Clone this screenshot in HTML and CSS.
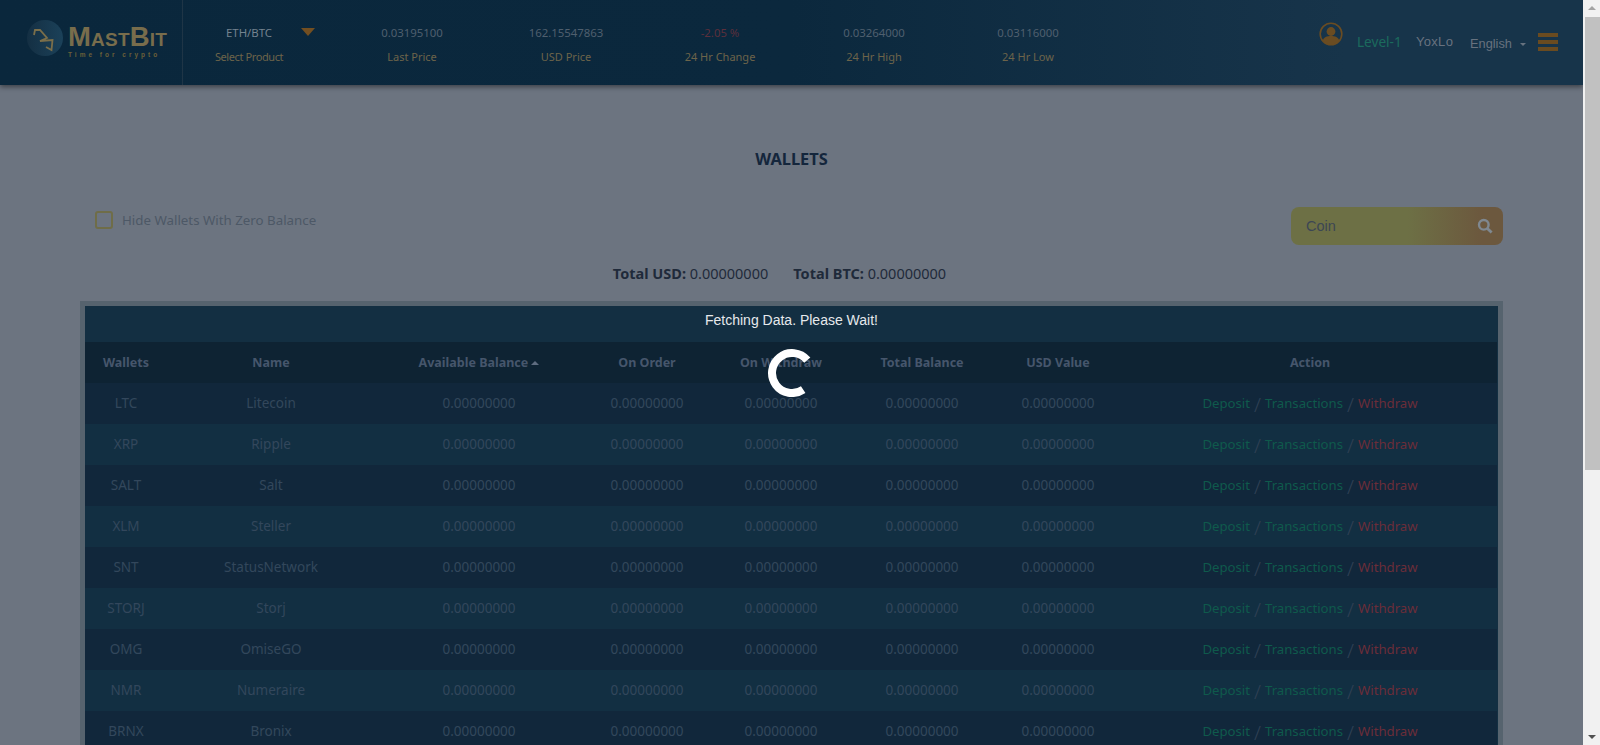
FILE: index.html
```html
<!DOCTYPE html>
<html lang="en">
<head>
    <meta charset="UTF-8">
    <meta name="viewport" content="width=device-width, initial-scale=1.0">
    <title>MastBit - Wallets</title>
    <link rel="stylesheet" href="styles.css">
</head>
<body>
    <div class="page">
        <header class="topbar">
            <div class="logo">
                <svg class="logo-mark" width="36" height="36" viewBox="0 0 36 36">
                    <defs>
                        <linearGradient id="logoBg" x1="0" y1="0" x2="1" y2="0">
                            <stop offset="0" stop-color="#142f43"/>
                            <stop offset="1" stop-color="#1b4159"/>
                        </linearGradient>
                    </defs>
                    <circle cx="18" cy="18" r="18" fill="url(#logoBg)"/>
                    <path d="M7 15 L8 10 L13 10 L20 18 L13 21 L25.5 20 L24.5 30 L19 27" fill="none" stroke="#7a6e4a" stroke-width="1.8"/>
                </svg>
                <div class="logo-text">
                    <div class="logo-name"><span class="cap">M</span>AST<span class="cap">B</span>IT</div>
                    <div class="logo-tag">Time for crypto</div>
                </div>
            </div>
            <div class="product">
                <div class="stat-value product-name">ETH/BTC</div>
                <div class="stat-label">Select Product</div>
                <span class="product-arrow"></span>
            </div>
            <div class="stats">
                <div class="stat">
                    <div class="stat-value">0.03195100</div>
                    <div class="stat-label">Last Price</div>
                </div>
                <div class="stat">
                    <div class="stat-value">162.15547863</div>
                    <div class="stat-label">USD Price</div>
                </div>
                <div class="stat">
                    <div class="stat-value negative">-2.05 %</div>
                    <div class="stat-label">24 Hr Change</div>
                </div>
                <div class="stat">
                    <div class="stat-value">0.03264000</div>
                    <div class="stat-label">24 Hr High</div>
                </div>
                <div class="stat">
                    <div class="stat-value">0.03116000</div>
                    <div class="stat-label">24 Hr Low</div>
                </div>
            </div>
            <div class="user-menu">
                <svg class="user-icon" width="24" height="24" viewBox="0 0 24 24">
                    <circle cx="12" cy="12" r="10.8" fill="none" stroke="#6a4c22" stroke-width="1.6"/>
                    <circle cx="12" cy="9.5" r="4.4" fill="#6a4c22"/>
                    <path d="M3.6 19 C4.5 15 8 14 12 14 C16 14 19.5 15 20.4 19 C18 21.6 15 22.4 12 22.4 C9 22.4 6 21.6 3.6 19 Z" fill="#6a4c22"/>
                </svg>
                <span class="level">Level-1</span>
                <span class="username">YoxLo</span>
                <span class="language">English<span class="caret"></span></span>
                <div class="hamburger"><span></span><span></span><span></span></div>
            </div>
        </header>

        <main class="content">
            <h1 class="title">WALLETS</h1>
            <div class="filters">
                <label class="hide-zero"><span class="checkbox"></span>Hide Wallets With Zero Balance</label>
                <div class="search">
                    <span>Coin</span>
                    <svg width="16" height="16" viewBox="0 0 16 16">
                        <circle cx="6.8" cy="6.8" r="4.8" fill="none" stroke="#7f8890" stroke-width="2.4"/>
                        <path d="M10.4 10.4 L14.6 14.6" stroke="#7f8890" stroke-width="2.8"/>
                    </svg>
                </div>
            </div>
            <div class="totals">
                <span><b>Total USD:</b> 0.00000000</span>
                <span><b>Total BTC:</b> 0.00000000</span>
            </div>

            <div class="table-wrap">
                <div class="fetching">Fetching Data. Please Wait!</div>
                <table class="wallets">
                    <colgroup>
                        <col class="c-coin"><col class="c-name"><col class="c-avail"><col class="c-order">
                        <col class="c-withdraw"><col class="c-total"><col class="c-usd"><col class="c-action">
                    </colgroup>
                    <thead>
                        <tr>
                            <th>Wallets</th>
                            <th>Name</th>
                            <th>Available Balance <span class="sort-up"></span></th>
                            <th>On Order</th>
                            <th>On Withdraw</th>
                            <th>Total Balance</th>
                            <th>USD Value</th>
                            <th>Action</th>
                        </tr>
                    </thead>
                    <tbody>
                        <tr><td>LTC</td><td>Litecoin</td><td>0.00000000</td><td>0.00000000</td><td>0.00000000</td><td>0.00000000</td><td>0.00000000</td><td class="actions"><a class="ok">Deposit</a><i>/</i><a class="ok">Transactions</a><i>/</i><a class="bad">Withdraw</a></td></tr>
                        <tr><td>XRP</td><td>Ripple</td><td>0.00000000</td><td>0.00000000</td><td>0.00000000</td><td>0.00000000</td><td>0.00000000</td><td class="actions"><a class="ok">Deposit</a><i>/</i><a class="ok">Transactions</a><i>/</i><a class="bad">Withdraw</a></td></tr>
                        <tr><td>SALT</td><td>Salt</td><td>0.00000000</td><td>0.00000000</td><td>0.00000000</td><td>0.00000000</td><td>0.00000000</td><td class="actions"><a class="ok">Deposit</a><i>/</i><a class="ok">Transactions</a><i>/</i><a class="bad">Withdraw</a></td></tr>
                        <tr><td>XLM</td><td>Steller</td><td>0.00000000</td><td>0.00000000</td><td>0.00000000</td><td>0.00000000</td><td>0.00000000</td><td class="actions"><a class="ok">Deposit</a><i>/</i><a class="ok">Transactions</a><i>/</i><a class="bad">Withdraw</a></td></tr>
                        <tr><td>SNT</td><td>StatusNetwork</td><td>0.00000000</td><td>0.00000000</td><td>0.00000000</td><td>0.00000000</td><td>0.00000000</td><td class="actions"><a class="ok">Deposit</a><i>/</i><a class="ok">Transactions</a><i>/</i><a class="bad">Withdraw</a></td></tr>
                        <tr><td>STORJ</td><td>Storj</td><td>0.00000000</td><td>0.00000000</td><td>0.00000000</td><td>0.00000000</td><td>0.00000000</td><td class="actions"><a class="ok">Deposit</a><i>/</i><a class="ok">Transactions</a><i>/</i><a class="bad">Withdraw</a></td></tr>
                        <tr><td>OMG</td><td>OmiseGO</td><td>0.00000000</td><td>0.00000000</td><td>0.00000000</td><td>0.00000000</td><td>0.00000000</td><td class="actions"><a class="ok">Deposit</a><i>/</i><a class="ok">Transactions</a><i>/</i><a class="bad">Withdraw</a></td></tr>
                        <tr><td>NMR</td><td>Numeraire</td><td>0.00000000</td><td>0.00000000</td><td>0.00000000</td><td>0.00000000</td><td>0.00000000</td><td class="actions"><a class="ok">Deposit</a><i>/</i><a class="ok">Transactions</a><i>/</i><a class="bad">Withdraw</a></td></tr>
                        <tr><td>BRNX</td><td>Bronix</td><td>0.00000000</td><td>0.00000000</td><td>0.00000000</td><td>0.00000000</td><td>0.00000000</td><td class="actions"><a class="ok">Deposit</a><i>/</i><a class="ok">Transactions</a><i>/</i><a class="bad">Withdraw</a></td></tr>
                    </tbody>
                </table>
            </div>
        </main>

        <svg class="spinner" width="48" height="48" viewBox="0 0 48 48">
            <path d="M35.2 40.6 A20 20 0 1 1 39.3 11.1" fill="none" stroke="#fff" stroke-width="8"/>
        </svg>
    </div>

    <div class="scrollbar">
        <span class="arrow-up"></span>
        <div class="thumb"></div>
        <span class="arrow-down"></span>
    </div>
</body>
</html>
```

FILE: styles.css
```css
* {
    box-sizing: border-box;
}
html, body {
    margin: 0;
    height: 745px;
    overflow: hidden;
}
body {
    display: flex;
    font-family: "Noto Sans", Arial, sans-serif;
    background-color: #f1f1f1;
}
.page {
    position: relative;
    width: 1583px;
    height: 745px;
    overflow: hidden;
    background-color: #6c7480;
}

/* top bar */
.topbar {
    position: relative;
    height: 85px;
    display: flex;
    background: linear-gradient(90deg, #0a273c 0%, #0b283d 50%, #17344a 85%);
    box-shadow: 0 2px 5px rgba(0, 0, 0, 0.45);
}
.logo {
    width: 183px;
    padding: 20px 0 0 27px;
    display: flex;
    gap: 5px;
    border-right: 1px solid #1f3546;
}
.logo-text {
    font-family: "Liberation Sans", Arial, sans-serif;
    font-weight: bold;
    color: #786d4c;
}
.logo-name {
    font-size: 19px;
    line-height: 24px;
    margin-top: 5px;
    letter-spacing: 0.2px;
}
.logo-name .cap {
    font-size: 27.5px;
}
.logo-tag {
    font-size: 6.5px;
    line-height: 6px;
    letter-spacing: 3px;
    color: #6a6039;
    white-space: nowrap;
}
.product {
    position: relative;
    width: 132px;
    margin-right: 20px;
    padding-top: 24px;
    text-align: center;
}
.product .stat-label {
    letter-spacing: -0.4px;
}
.product-arrow {
    position: absolute;
    left: 118px;
    top: 28px;
    border-left: 7px solid transparent;
    border-right: 7px solid transparent;
    border-top: 8px solid #734f21;
}
.stats {
    display: flex;
    padding-top: 24px;
}
.stat {
    width: 154px;
    text-align: center;
}
.stat-value {
    font-size: 11.4px;
    line-height: 17px;
    color: #4f5f6e;
    white-space: nowrap;
}
.stat-value.negative {
    color: #5c2f3c;
}
.stat-value.product-name {
    color: #74838f;
}
.stat-label {
    font-size: 11px;
    line-height: 17px;
    margin-top: 7px;
    color: #6d644a;
    white-space: nowrap;
}
.user-menu {
    position: absolute;
    left: 1319px;
    top: 22px;
    display: flex;
    align-items: flex-start;
}
.user-icon {
    margin-right: 14px;
}
.level, .username, .language {
    font-size: 13px;
    line-height: 18px;
    margin-top: 11px;
}
.level {
    width: 59px;
    font-size: 13.6px;
    color: #1b6b5d;
}
.username {
    width: 54px;
    font-family: "Liberation Sans", Arial, sans-serif;
    letter-spacing: 0.3px;
    color: #67727f;
}
.language {
    width: 68px;
    font-family: "Liberation Sans", Arial, sans-serif;
    font-size: 12.8px;
    margin-top: 13px;
    color: #67727f;
}
.caret {
    display: inline-block;
    margin-left: 8px;
    vertical-align: 2px;
    border-left: 3px solid transparent;
    border-right: 3px solid transparent;
    border-top: 3px solid #67727f;
}
.hamburger {
    width: 20px;
    margin-top: 11px;
    display: flex;
    flex-direction: column;
    gap: 3.5px;
}
.hamburger span {
    height: 3.5px;
    background-color: #6a4b20;
}

/* wallets content */
.content {
    padding: 0 80px;
}
.title {
    margin: 0;
    padding-top: 63px;
    text-align: center;
    font-size: 16.4px;
    line-height: 22px;
    font-weight: bold;
    color: #14263c;
}
.filters {
    display: flex;
    justify-content: space-between;
    padding: 37px 0 0 15px;
}
.hide-zero {
    display: flex;
    gap: 9px;
    height: 18px;
    font-size: 13.3px;
    line-height: 18px;
    margin-top: 4px;
    color: #4d5866;
}
.checkbox {
    width: 18px;
    height: 18px;
    border: 2px solid #6f6d48;
    border-radius: 3px;
}
.search {
    width: 212px;
    height: 38px;
    padding: 0 10px 0 15px;
    display: flex;
    align-items: center;
    justify-content: space-between;
    border-radius: 8px;
    font-family: "Liberation Sans", Arial, sans-serif;
    font-size: 14.5px;
    color: #3c4654;
    background: linear-gradient(90deg, #6d7045 0%, #6d7045 55%, #6c583e 90%);
}
.totals {
    display: flex;
    justify-content: center;
    gap: 25px;
    height: 56px;
    padding-top: 16px;
    padding-right: 24px;
    font-size: 14.5px;
    line-height: 24px;
    color: #1f2a3a;
}
.table-wrap {
    border: 5px solid #56636e;
    border-bottom: 0;
    width: 1423px;
    background-color: #132f42;
}
.fetching {
    height: 36px;
    line-height: 28px;
    text-align: center;
    font-family: "Liberation Sans", Arial, sans-serif;
    font-size: 14px;
    color: #e6e9ec;
}
.wallets {
    width: 1412px;
    table-layout: fixed;
    border-collapse: collapse;
    font-size: 13.5px;
    text-align: center;
}
.c-coin { width: 82px; }
.c-name { width: 208px; }
.c-avail { width: 208px; }
.c-order { width: 128px; }
.c-withdraw { width: 140px; }
.c-total { width: 142px; }
.c-usd { width: 130px; }
.c-action { width: 374px; }
.wallets th {
    height: 41px;
    padding: 0;
    font-size: 12.5px;
    font-weight: bold;
    color: #46566c;
    background-color: #0e2333;
}
.wallets td {
    height: 41px;
    padding: 0 0 2px;
    color: #33475c;
    white-space: nowrap;
}
.wallets tbody tr:nth-child(odd) {
    background-color: #11273b;
}
.wallets tbody tr:nth-child(even) {
    background-color: #122f42;
}
.sort-up {
    display: inline-block;
    vertical-align: 2px;
    border-left: 4px solid transparent;
    border-right: 4px solid transparent;
    border-bottom: 4px solid #5e6c80;
}
.wallets .actions {
    font-size: 13.2px;
}
.wallets a.ok {
    color: #0f5a4c;
}
.wallets a.bad {
    color: #6b2d39;
}
.wallets i {
    display: inline-block;
    margin: 0 4px;
    font-size: 20px;
    line-height: 14px;
    vertical-align: -4px;
    font-style: normal;
    font-weight: 300;
    color: #2f4054;
}

/* loading spinner, sits above the table */
.spinner {
    position: absolute;
    left: 768px;
    top: 349px;
}

/* scrollbar strip */
.scrollbar {
    position: relative;
    width: 17px;
    height: 745px;
}
.thumb {
    position: absolute;
    left: 2px;
    top: 17px;
    width: 15px;
    height: 453px;
    background-color: #c1c1c1;
}
.arrow-up {
    position: absolute;
    left: 5px;
    top: 6px;
    border-left: 4px solid transparent;
    border-right: 4px solid transparent;
    border-bottom: 4px solid #a3a3a3;
}
.arrow-down {
    position: absolute;
    left: 5px;
    bottom: 6px;
    border-left: 4px solid transparent;
    border-right: 4px solid transparent;
    border-top: 4px solid #505050;
}
```
